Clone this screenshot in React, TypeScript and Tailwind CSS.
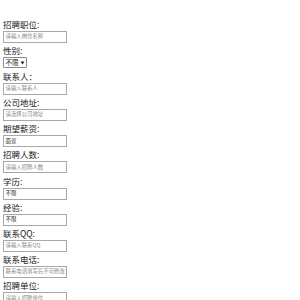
const fields: { label: string; kind: "input" | "select"; placeholder?: string; value?: string }[] = [
  { label: "招聘职位:", kind: "input", placeholder: "请输入岗位名称" },
  { label: "性别:", kind: "select", value: "不限" },
  { label: "联系人：", kind: "input", placeholder: "请输入联系人" },
  { label: "公司地址:", kind: "input", placeholder: "请选择公司地址" },
  { label: "期望薪资:", kind: "input", value: "面议" },
  { label: "招聘人数:", kind: "input", placeholder: "请输入招聘人数" },
  { label: "学历:", kind: "input", value: "不限" },
  { label: "经验:", kind: "input", value: "不限" },
  { label: "联系QQ:", kind: "input", placeholder: "请输入联系QQ" },
  { label: "联系电话:", kind: "input", placeholder: "联系电话填写后不可修改" },
  { label: "招聘单位:", kind: "input", placeholder: "请输入招聘单位" },
];

export default function App() {
  return (
    <div
      className="h-[300px] w-[300px] overflow-hidden bg-white pl-[3px] pt-[17.5px] text-[#222]"
      style={{ fontFamily: '"Noto Sans CJK SC", "Noto Sans", sans-serif' }}
    >
      {fields.map((f, i) => (
        <div key={i} className="flex h-[26.2px] flex-col items-start">
          <div className="h-[13px] whitespace-nowrap text-[8.5px] leading-[13px]">{f.label}</div>
          {f.kind === "input" ? (
            <div className="flex h-[12px] w-[64px] items-center overflow-hidden whitespace-nowrap border border-[#a8a8a8] bg-white px-[1.5px] text-[5.4px] leading-none">
              {f.value ? (
                <span className="text-[#222]">{f.value}</span>
              ) : (
                <span className="text-[#8a8a8a]">{f.placeholder}</span>
              )}
            </div>
          ) : (
            <div className="mt-[0.5px] flex h-[11px] items-center gap-[1px] whitespace-nowrap rounded-[1px] border border-[#8a8a8a] bg-white px-[1.5px] text-[6.5px] leading-none">
              <span>{f.value}</span>
              <svg width="5" height="4" viewBox="0 0 5 4">
                <path d="M0.5 0.5 L4.5 0.5 L2.5 3.5 Z" fill="#222" />
              </svg>
            </div>
          )}
        </div>
      ))}
    </div>
  );
}
